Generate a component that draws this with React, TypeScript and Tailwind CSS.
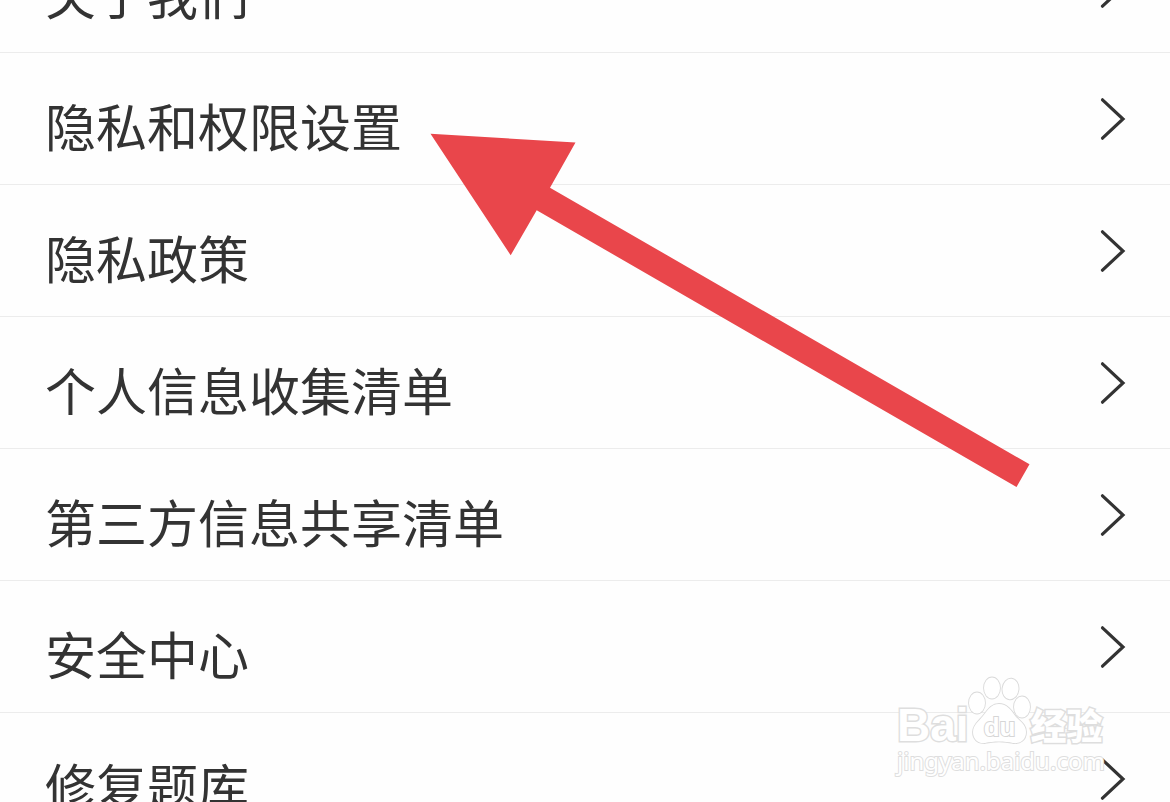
const items = [
  "关于我们",
  "隐私和权限设置",
  "隐私政策",
  "个人信息收集清单",
  "第三方信息共享清单",
  "安全中心",
  "修复题库",
];

function Chevron() {
  return (
    <svg className="h-11 w-7 shrink-0" viewBox="0 0 28 44" fill="none" aria-hidden="true">
      <path d="M4.500 2.800 25 22 4.500 41.200" stroke="#333333" strokeWidth="3.200" strokeLinecap="round" />
    </svg>
  );
}

function Row({ label }: { label: string }) {
  return (
    <li className="border-b border-[#ececec]">
      <a href="#" className="flex h-[131px] items-center justify-between pr-11 pl-[45px]">
        <span className="pt-3 text-[51px] leading-[76px] text-[#333333]">{label}</span>
        <Chevron />
      </a>
    </li>
  );
}

function PointerArrow() {
  return (
    <svg
      className="pointer-events-none absolute top-[130px] left-[428px] h-[360px] w-[604px]"
      viewBox="428 130 604 360"
      aria-hidden="true"
    >
      <path d="M430.500 133.700 575.500 142.500 550 187.700 1029.500 464.300 1016.500 487 536.700 210.300 510.700 255.300Z" fill="#e9464b" />
    </svg>
  );
}

function Watermark() {
  return (
    <div className="pointer-events-none absolute top-[674px] left-[897px] w-[212px] text-white [paint-order:stroke] [-webkit-text-stroke:3px_#dedede]">
      <div className="flex h-[72px] items-end">
        <span className="font-['Liberation_Sans',sans-serif] text-[46px] leading-[42px] font-bold">Bai</span>
        <div className="relative h-[72px] w-[62px] shrink-0">
          <svg className="absolute top-0 left-0 h-[74px] w-[62px] overflow-visible" viewBox="0 0 62 74" aria-hidden="true">
            <g fill="#ffffff" stroke="#dadada" strokeWidth="1.800">
              <ellipse cx="8" cy="29" rx="8" ry="10.500" />
              <ellipse cx="23" cy="14" rx="8" ry="10.500" />
              <ellipse cx="41.500" cy="15" rx="8" ry="10.300" transform="rotate(6 41.500 15)" />
              <ellipse cx="53" cy="33" rx="8" ry="10.500" />
              <path d="M30 30C38 30 42 36 47 43 52 48 57 51 57 58 57 66 51 70 44 69 36 67 24 67 16 69 9 70 4 65 4 58 4 51 10 47 14 42 19 36 22 30 30 30Z" />
            </g>
          </svg>
          <span className="absolute inset-x-0 bottom-1 text-center font-['Liberation_Sans',sans-serif] text-[26px] leading-[30px] font-bold [-webkit-text-stroke:2px_#d6d6d6]">
            du
          </span>
        </div>
        <span className="text-[36px] leading-[44px] font-black whitespace-nowrap">经验</span>
      </div>
      <div className="pt-[2px] font-['Noto_Sans',sans-serif] text-[24px] leading-[26px] whitespace-nowrap [-webkit-text-stroke:2px_#dedede]">
        jingyan.baidu.com
      </div>
    </div>
  );
}

export default function App() {
  return (
    <main className="relative h-screen overflow-hidden bg-[#fefefe] font-['Noto_Sans_CJK_SC',sans-serif]">
      <ul className="-mt-[79px]">
        {items.map((label) => (
          <Row key={label} label={label} />
        ))}
      </ul>
      <PointerArrow />
      <Watermark />
    </main>
  );
}
